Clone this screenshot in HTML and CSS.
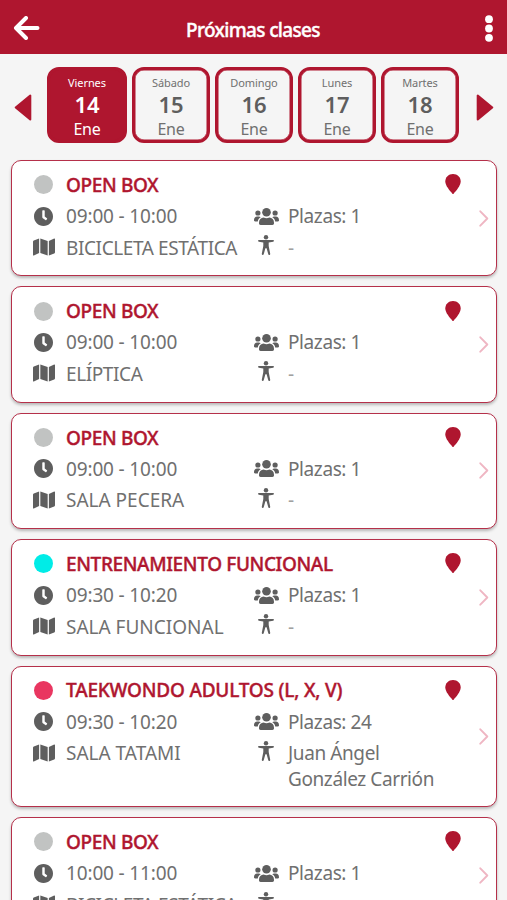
FILE: index.html
```html
<!DOCTYPE html>
<html lang="es">
<head>
<meta charset="UTF-8" />
<meta name="viewport" content="width=device-width, initial-scale=1" />
<title>Próximas clases</title>
<link rel="stylesheet" href="styles.css">
</head>
<body>

<svg class="sprite" aria-hidden="true">
  <symbol id="clock" viewBox="8 8 496 496"><path d="M256,8C119,8,8,119,8,256S119,504,256,504,504,393,504,256,393,8,256,8Zm92.49,313h0l-20,25a16,16,0,0,1-22.49,2.5h0l-67-49.72a40,40,0,0,1-15-31.23V112a16,16,0,0,1,16-16h32a16,16,0,0,1,16,16V256l58,42.5A16,16,0,0,1,348.49,321Z"/></symbol>
  <symbol id="map" viewBox="0 32 576 448"><path d="M0 117.66v346.32c0 11.32 11.43 19.06 21.94 14.86L160 416V32L20.12 87.95A32 32 0 0 0 0 117.66zM192 416l192 64V96L192 32v384zM554.06 33.16L416 96v384l139.88-55.95A32 32 0 0 0 576 394.34V48.02c0-11.32-11.43-19.06-21.94-14.86z"/></symbol>
  <symbol id="users" viewBox="0 0 25 17">
    <circle cx="12.5" cy="4.3" r="4.3"/>
    <circle cx="3.9" cy="5" r="2.6"/>
    <circle cx="21.1" cy="5" r="2.6"/>
    <path d="M5 14.8C5 11.7 7 9.8 9.600 9.600c1.900.9 3.900.9 5.800 0C18 9.800 20 11.700 20 14.800v.5c0 1-.6 1.600-1.600 1.600H6.600C5.600 16.900 5 16.300 5 15.300z"/>
    <path d="M0 12.200C0 9.900 1.300 8.600 3.200 8.600h1.500c.8 0 1.500.3 2 .7C5 10.300 4.100 11.600 3.800 13.400H1.200C.4 13.400 0 13 0 12.200zM25 12.200c0-2.300-1.300-3.600-3.200-3.600h-1.500c-.8 0-1.500.3-2 .7 1.700 1 2.600 2.300 2.900 4.100h2.600c.8 0 1.200-.4 1.200-1.200z"/>
  </symbol>
  <symbol id="body" viewBox="0 0 16 20">
    <circle cx="8" cy="2.200" r="2.200"/>
    <path d="M.9 5h14.200c.5 0 .9.300.9.800s-.3.800-.8.900L10.700 7.500v3.600l1.500 7.700c.1.600-.2 1.100-.7 1.200-.6.100-1.100-.2-1.200-.8L8.600 13.300H7.400L5.700 19.200c-.2.600-.7.900-1.200.8-.6-.1-.8-.6-.7-1.200l1.500-7.700V7.500L.8 6.700C.3 6.600 0 6.300 0 5.800S.4 5 .9 5z"/>
  </symbol>
  <symbol id="pin" viewBox="0 0 16 20"><path d="M8 0C3.500 0 .3 3.300.3 7.600c0 4 4.200 8.800 7.100 12.100.4.400.8.400 1.200 0 2.900-3.300 7.100-8.100 7.100-12.100C15.700 3.300 12.500 0 8 0z"/></symbol>
  <symbol id="chevron" viewBox="0 0 10 17"><path d="M1.300 1.300l7 7.200-7 7.200" fill="none" stroke="currentColor" stroke-width="1.900" stroke-linecap="round" stroke-linejoin="round"/></symbol>
</svg>

<header>
  <svg class="back" viewBox="0 0 26 24"><path d="M24 12H3M12.500 2L2.500 12l10 10" /></svg>
  <h1>Próximas clases</h1>
  <svg class="more" viewBox="0 0 8 27"><circle cx="4" cy="4.200" r="3.900"/><circle cx="4" cy="13.500" r="3.900"/><circle cx="4" cy="22.800" r="3.900"/></svg>
</header>

<nav class="days">
  <svg class="arrow" viewBox="0 0 17 26"><path d="M15.500 1.500v23L1.500 13z"/></svg>
  <div class="day-list">
    <div class="day active"><small>Viernes</small><b>14</b><span>Ene</span></div>
    <div class="day"><small>Sábado</small><b>15</b><span>Ene</span></div>
    <div class="day"><small>Domingo</small><b>16</b><span>Ene</span></div>
    <div class="day"><small>Lunes</small><b>17</b><span>Ene</span></div>
    <div class="day"><small>Martes</small><b>18</b><span>Ene</span></div>
  </div>
  <svg class="arrow" viewBox="0 0 17 26"><path d="M1.500 1.500v23L15.500 13z"/></svg>
</nav>

<main>
  <article class="class-card">
    <div class="info">
      <div class="title"><i class="dot"></i><h2>OPEN BOX</h2><svg class="pin"><use href="#pin"/></svg></div>
      <div class="left"><svg class="clock"><use href="#clock"/></svg><span class="time">09:00 - 10:00</span></div>
      <div class="right"><svg class="users"><use href="#users"/></svg><span>Plazas: 1</span></div>
      <div class="left"><svg class="map"><use href="#map"/></svg><span class="tight">BICICLETA ESTÁTICA</span></div>
      <div class="right"><svg class="person"><use href="#body"/></svg><span class="none">-</span></div>
    </div>
    <svg class="chevron"><use href="#chevron"/></svg>
  </article>

  <article class="class-card">
    <div class="info">
      <div class="title"><i class="dot"></i><h2>OPEN BOX</h2><svg class="pin"><use href="#pin"/></svg></div>
      <div class="left"><svg class="clock"><use href="#clock"/></svg><span class="time">09:00 - 10:00</span></div>
      <div class="right"><svg class="users"><use href="#users"/></svg><span>Plazas: 1</span></div>
      <div class="left"><svg class="map"><use href="#map"/></svg><span class="tight">ELÍPTICA</span></div>
      <div class="right"><svg class="person"><use href="#body"/></svg><span class="none">-</span></div>
    </div>
    <svg class="chevron"><use href="#chevron"/></svg>
  </article>

  <article class="class-card">
    <div class="info">
      <div class="title"><i class="dot"></i><h2>OPEN BOX</h2><svg class="pin"><use href="#pin"/></svg></div>
      <div class="left"><svg class="clock"><use href="#clock"/></svg><span class="time">09:00 - 10:00</span></div>
      <div class="right"><svg class="users"><use href="#users"/></svg><span>Plazas: 1</span></div>
      <div class="left"><svg class="map"><use href="#map"/></svg><span>SALA PECERA</span></div>
      <div class="right"><svg class="person"><use href="#body"/></svg><span class="none">-</span></div>
    </div>
    <svg class="chevron"><use href="#chevron"/></svg>
  </article>

  <article class="class-card">
    <div class="info">
      <div class="title"><i class="dot cyan"></i><h2>ENTRENAMIENTO FUNCIONAL</h2><svg class="pin"><use href="#pin"/></svg></div>
      <div class="left"><svg class="clock"><use href="#clock"/></svg><span class="time">09:30 - 10:20</span></div>
      <div class="right"><svg class="users"><use href="#users"/></svg><span>Plazas: 1</span></div>
      <div class="left"><svg class="map"><use href="#map"/></svg><span>SALA FUNCIONAL</span></div>
      <div class="right"><svg class="person"><use href="#body"/></svg><span class="none">-</span></div>
    </div>
    <svg class="chevron"><use href="#chevron"/></svg>
  </article>

  <article class="class-card">
    <div class="info">
      <div class="title"><i class="dot pink"></i><h2 class="wide">TAEKWONDO ADULTOS (L, X, V)</h2><svg class="pin"><use href="#pin"/></svg></div>
      <div class="left"><svg class="clock"><use href="#clock"/></svg><span class="time">09:30 - 10:20</span></div>
      <div class="right"><svg class="users"><use href="#users"/></svg><span>Plazas: 24</span></div>
      <div class="left"><svg class="map"><use href="#map"/></svg><span>SALA TATAMI</span></div>
      <div class="right"><svg class="person"><use href="#body"/></svg><span>Juan Ángel<br>González Carrión</span></div>
    </div>
    <svg class="chevron"><use href="#chevron"/></svg>
  </article>

  <article class="class-card">
    <div class="info">
      <div class="title"><i class="dot"></i><h2>OPEN BOX</h2><svg class="pin"><use href="#pin"/></svg></div>
      <div class="left"><svg class="clock"><use href="#clock"/></svg><span class="time">10:00 - 11:00</span></div>
      <div class="right"><svg class="users"><use href="#users"/></svg><span>Plazas: 1</span></div>
      <div class="left"><svg class="map"><use href="#map"/></svg><span class="tight">BICICLETA ESTÁTICA</span></div>
      <div class="right"><svg class="person"><use href="#body"/></svg><span class="none">-</span></div>
    </div>
    <svg class="chevron"><use href="#chevron"/></svg>
  </article>
</main>

</body>
</html>
```
FILE: styles.css
```css
* {
  box-sizing: border-box;
}
body {
  margin: 0;
  height: 900px;
  overflow: hidden;
  background: #f5f5f5;
  color: #707070;
  font-family: 'Noto Sans', sans-serif;
}
.sprite {
  display: none;
}
svg {
  display: block;
  flex: none;
  fill: currentColor;
}
header {
  display: flex;
  align-items: center;
  justify-content: space-between;
  height: 54px;
  padding: 2px 14px 0 13px;
  background: #af162f;
  color: #fff;
}
header h1 {
  margin: 3px 0 0;
  font-size: 19px;
  font-weight: 500;
  line-height: 26px;
  letter-spacing: -0.65px;
  -webkit-text-stroke: 0.4px;
}
.back {
  width: 27px;
  height: 24px;
  fill: none;
  stroke: #fff;
  stroke-width: 4;
  stroke-linecap: round;
  stroke-linejoin: round;
}
.more {
  width: 8px;
  height: 27px;
  margin-left: 19px;
}

/* Selector de días */
.days {
  display: flex;
  align-items: center;
  justify-content: space-between;
  height: 106px;
  padding: 0 13px 4px 14px;
}
.arrow {
  width: 18px;
  height: 27px;
  margin-top: 4px;
  color: #af162f;
  stroke: #af162f;
  stroke-width: 2;
  stroke-linejoin: round;
}
.day-list {
  display: flex;
  gap: 5px;
  margin-right: 2px;
}
.day {
  display: flex;
  flex-direction: column;
  align-items: center;
  width: 78px;
  height: 76px;
  padding-top: 5px;
  border: 3px solid #af162f;
  border-radius: 12px;
  box-shadow: inset 0 0 0 0.5px #af162f;
}
.day.active {
  width: 80px;
  background: #af162f;
  color: #fff;
}
.day small {
  font-size: 11px;
  line-height: 15px;
  letter-spacing: -0.1px;
}
.day b {
  color: #5e5e5e;
  font-size: 22px;
  font-weight: 600;
  line-height: 29px;
}
.day.active b {
  color: #fff;
}
.day span {
  font-size: 16px;
  line-height: 20px;
  letter-spacing: -0.2px;
}

/* Tarjetas de clases */
main {
  display: flex;
  flex-direction: column;
  gap: 10px;
  padding: 0 10px 0 11px;
}
.class-card {
  display: flex;
  align-items: center;
  flex: none;
  min-height: 116.4px;
  padding-right: 7px;
  border: 1px solid #b5304a;
  border-radius: 10px;
  background: #fff;
  box-shadow: 0 2px 3px rgba(0, 0, 0, 0.25);
}
.info {
  flex: 1;
  align-self: flex-start;
  display: grid;
  grid-template-columns: 221px 1fr;
  padding: 8px 0 11px 21px;
}
.title {
  grid-column: 1 / 3;
  display: flex;
  align-items: center;
  height: 31.5px;
  color: #af162f;
}
.title h2 {
  flex: 1;
  margin: 0 0 0 13px;
  font-size: 19px;
  font-weight: 500;
  letter-spacing: -0.37px;
  -webkit-text-stroke: 0.4px;
}
.title .wide {
  letter-spacing: -0.2px;
}
.dot {
  width: 19px;
  height: 19px;
  margin-left: 1px;
  border-radius: 50%;
  background: #c1c3c2;
}
.dot.cyan {
  background: #00ece7;
}
.dot.pink {
  background: #e93660;
}
.pin {
  width: 16px;
  height: 20px;
  margin: 0 18px 1px 0;
}
.left,
.right {
  display: flex;
  align-items: flex-start;
  min-height: 31.5px;
  font-size: 19px;
  line-height: 26px;
}
.left span,
.right span {
  padding: 2.5px 0 3px;
}
.left .time {
  letter-spacing: -0.15px;
}
.left .tight {
  letter-spacing: -0.4px;
}
.right span {
  letter-spacing: -0.4px;
}
.right .none {
  color: #a0a0a0;
}
.left svg,
.right svg {
  color: #5e5e5e;
}
.left .clock {
  width: 19px;
  height: 19px;
  margin: 6px 13px 0 1px;
}
.left .map {
  width: 22px;
  height: 18px;
  margin: 6px 11px 0 0;
}
.right .users {
  width: 25px;
  height: 17px;
  margin: 7px 9px 0 0;
}
.right .person {
  width: 16px;
  height: 20px;
  margin: 3px 14px 0 4px;
}
.chevron {
  width: 10px;
  height: 17px;
  color: #efb6c3;
}
```
